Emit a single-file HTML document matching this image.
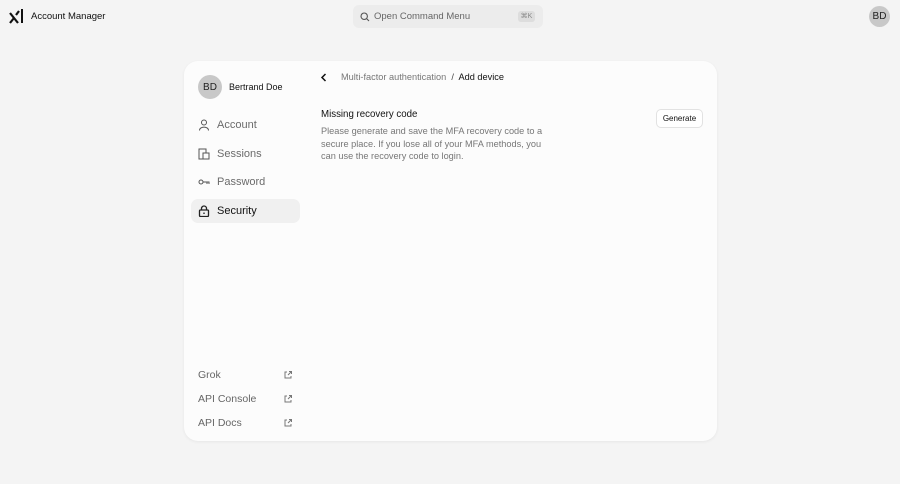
<!DOCTYPE html>
<html><head><meta charset="utf-8"><style>
*{box-sizing:border-box;margin:0;padding:0}
body{width:900px;height:484px;background:#f4f4f4;font-family:"Liberation Sans",sans-serif;position:relative;overflow:hidden;color:#111}
.abs{position:absolute}
.av{border-radius:50%;background:#c8c8c8;color:#222;display:flex;align-items:center;justify-content:center}
.card{left:184px;top:61px;width:533px;height:380px;background:#fcfcfc;border-radius:14px;box-shadow:0 1px 3px rgba(0,0,0,.06)}
.nav{left:191px;width:109px;height:24px;border-radius:7px;display:flex;align-items:center;padding-left:7px;font-size:11px;color:#6b6b6b}
.nav svg{width:12px;height:12px;margin-right:7px}
.lk{left:198px;font-size:10.5px;color:#666}
.ext{left:284px;width:8px;height:8px}
</style></head><body>
<svg class="abs" style="left:9px;top:8px" width="16" height="16" viewBox="0 0 16 16"><path d="M1 5 L9 15 M1 15 L5 10 M10 3 L7 7" stroke="#111" stroke-width="2.2" fill="none"/><path d="M13 1 V15" stroke="#111" stroke-width="2"/></svg>
<div class="abs" style="left:31px;top:11px;font-size:9.5px;color:#111">Account Manager</div>
<div class="abs" style="left:353px;top:5px;width:190px;height:23px;background:#ececec;border-radius:6px"></div>
<svg class="abs" style="left:360px;top:12px" width="10" height="10" viewBox="0 0 10 10"><circle cx="4.2" cy="4.2" r="3.2" stroke="#555" stroke-width="1.1" fill="none"/><path d="M6.6 6.6 9 9" stroke="#555" stroke-width="1.1"/></svg>
<div class="abs" style="left:374px;top:11px;font-size:9.5px;color:#666">Open Command Menu</div>
<div class="abs" style="left:518px;top:11px;width:17px;height:11px;background:#ddd;border-radius:3px;font-size:7px;color:#888;text-align:center;line-height:11px">⌘K</div>
<div class="abs av" style="left:869px;top:6px;width:21px;height:21px;font-size:10px">BD</div>
<div class="abs card"></div>
<div class="abs av" style="left:198px;top:75px;width:24px;height:24px;font-size:10px">BD</div>
<div class="abs" style="left:229px;top:82px;font-size:9px;color:#111">Bertrand Doe</div>
<div class="abs nav" style="top:113px"><svg viewBox="0 0 12 12"><circle cx="6" cy="3.5" r="2.5" stroke="#555" fill="none"/><path d="M1.5 11.5 C1.5 7 10.5 7 10.5 11.5" stroke="#555" fill="none"/></svg>Account</div>
<div class="abs nav" style="top:142px"><svg viewBox="0 0 12 12"><rect x="1" y="1" width="7" height="10" stroke="#555" fill="none"/><rect x="5" y="5" width="6" height="6" stroke="#555" fill="#fcfcfc"/></svg>Sessions</div>
<div class="abs nav" style="top:170px"><svg viewBox="0 0 12 12"><circle cx="3" cy="6" r="2" stroke="#555" fill="none"/><path d="M5 6H11.5M9 6V8M11 6V8" stroke="#555"/></svg>Password</div>
<div class="abs nav" style="top:199px;background:#f0f0f0;color:#111"><svg viewBox="0 0 12 12"><rect x="1.5" y="5" width="9" height="6.5" rx="1" stroke="#222" fill="none" stroke-width="1.3"/><path d="M3.5 5V3.5a2.5 2.5 0 0 1 5 0V5" stroke="#222" fill="none" stroke-width="1.3"/><circle cx="6" cy="8.2" r=".8" fill="#222"/></svg>Security</div>
<div class="abs lk" style="top:369px">Grok</div>
<div class="abs lk" style="top:393px">API Console</div>
<div class="abs lk" style="top:417px">API Docs</div>
<svg class="abs ext" style="top:371px" viewBox="0 0 8 8"><path d="M3 1H1V7H7V5M4 4 7.5.5M5 .5H7.5V3" stroke="#777" fill="none"/></svg>
<svg class="abs ext" style="top:395px" viewBox="0 0 8 8"><path d="M3 1H1V7H7V5M4 4 7.5.5M5 .5H7.5V3" stroke="#777" fill="none"/></svg>
<svg class="abs ext" style="top:419px" viewBox="0 0 8 8"><path d="M3 1H1V7H7V5M4 4 7.5.5M5 .5H7.5V3" stroke="#777" fill="none"/></svg>
<svg class="abs" style="left:320px;top:73px" width="8" height="9" viewBox="0 0 8 9"><path d="M5.5 1 2 4.5 5.5 8" stroke="#111" stroke-width="1.5" fill="none"/></svg>
<div class="abs" style="left:341px;top:72px;font-size:9.2px;color:#777">Multi-factor authentication <span style="color:#444">&nbsp;/&nbsp;</span> <span style="color:#111">Add device</span></div>
<div class="abs" style="left:321px;top:109px;font-size:9.7px;color:#111">Missing recovery code</div>
<div class="abs" style="left:321px;top:125px;width:225px;font-size:9.2px;line-height:12.5px;color:#777">Please generate and save the MFA recovery code to a secure place. If you lose all of your MFA methods, you can use the recovery code to login.</div>
<div class="abs" style="left:656px;top:109px;width:47px;height:19px;border:1px solid #e2e2e2;border-radius:5px;background:#fff;font-size:8px;text-align:center;line-height:17px;color:#111">Generate</div>
</body></html>
